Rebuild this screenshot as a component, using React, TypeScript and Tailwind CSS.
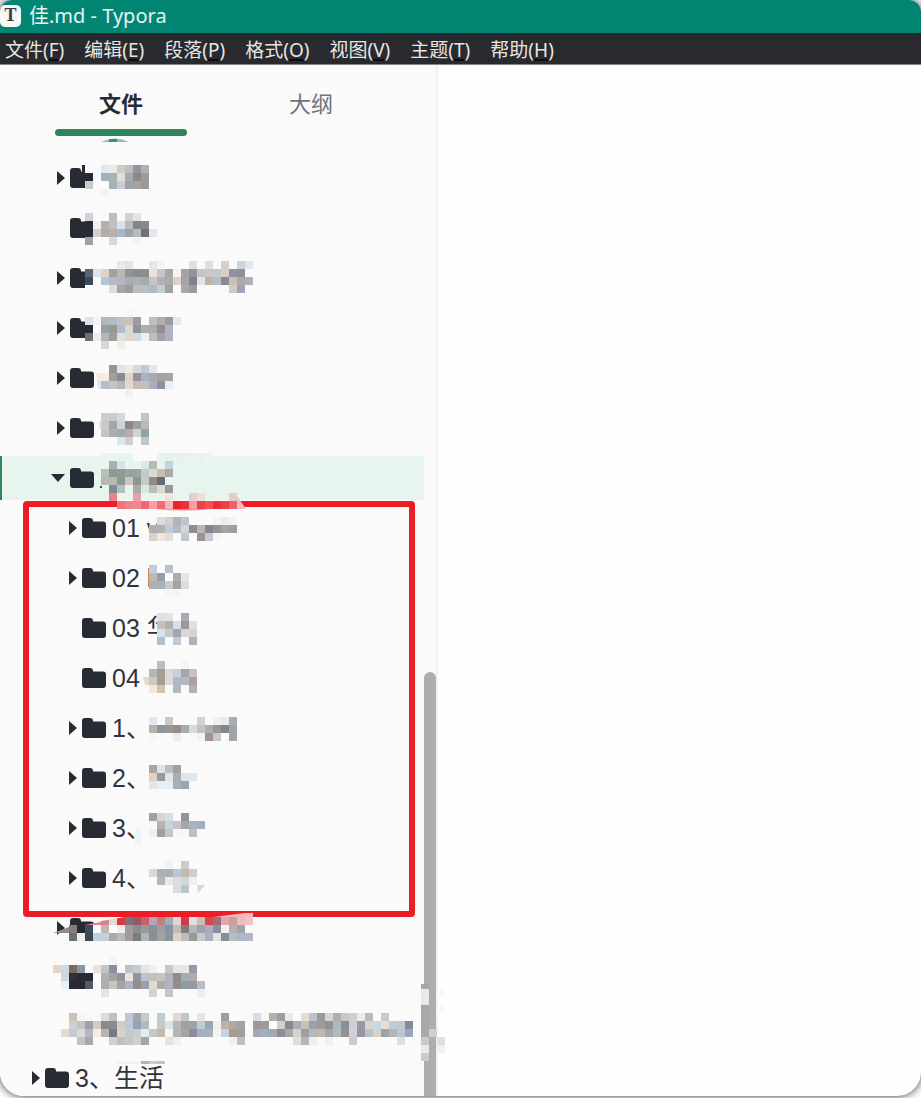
import type { ReactNode } from 'react';

const CELL = 8;
const PAPER = 'fafafa';

// One line per row of cells, colours in hex. '.' leaves a cell open, '-' paints it in the sidebar colour.
interface MosaicData {
    x: number;
    y: number;
    lines: string[];
}

type Arrow = 'closed' | 'open' | 'none';

interface TreeItem {
    id: number;
    arrow: Arrow;
    folder?: boolean;
    label?: string;
    selected?: boolean;
    mosaic?: MosaicData;
    extra?: ReactNode;
}

const menus = [
    { label: '文件', key: 'F' },
    { label: '编辑', key: 'E' },
    { label: '段落', key: 'P' },
    { label: '格式', key: 'O' },
    { label: '视图', key: 'V' },
    { label: '主题', key: 'T' },
    { label: '帮助', key: 'H' },
];

const topItems: TreeItem[] = [
    {
        id: 1,
        arrow: 'closed',
        mosaic: {
            x: 85,
            y: 1,
            lines: [
                '. . f7f7f7',
                '- - dfe9ed efe9e2 cfcbc9 bebec2 8f969e aeb0ba',
                '272b33 - 9fb2c3 a8b2ae deddd7 a9a9a9 8e8882 999a9d',
                'c9cacc - fdfdfd a7b1ad cacdd7 9da2ad a9a19d 9a9a9c',
                '. . f2f4f6',
            ],
        },
        extra: <path d="M82 9h3v8h-3z" fill="#272b33" />,
    },
    {
        id: 2,
        arrow: 'none',
        mosaic: {
            x: 85,
            y: 7,
            lines: [
                'd0d1d6 - . c5b9b3 . d3d0d0 dfe5e7',
                '272b33 f2efed b9afa8 bcc2c1 d8e3ec bdb9ba 858589 8a898c',
                '272b33 d5cfcd b0aeb0 b9afa7 a7b5c6 9ba4b1 b7babb 727177 e1e8ed',
                'a0a1a4 . . d2d9df . . f4f4f4',
            ],
        },
    },
    {
        id: 3,
        arrow: 'closed',
        mosaic: {
            x: 85,
            y: 5,
            lines: [
                '- . . . e9e9ea e2e5e8 . . e1e7ed f4f4f4 . . . dedfe1 . dedede . d7cfca . d0d3d8 e0e7ee',
                '596571 dbe4ee e0d2c5 a4a19b b5b7b8 919597 868e96 8c8f90 ede1d4 c4c6c6 a6a8a7 f6f3ef a3a2a7 95929f c5c5c7 c8cac9 c8caca d9cfc8 8f92a0 8d919d',
                '384b60 - b5c5d5 b6b8c6 b4b5c1 a6adb7 aeb1ab a8abac c0c6cc b8adb0 a9aca9 dfd2c5 a5a3a7 84818a e4e4e5 bdb5ac b2bec8 8f8992 c9bfb9 a9a9a8 b1b1b8',
                '- - . d9dee6 a3a5a6 9b9c9b b9bdc3 b4bfc6 b1b8c3 c0cfd4 a1a19e . a8a8b1 9b9aa1 . . . f7f8f8 d3cac3 9ba6b6',
            ],
        },
    },
    {
        id: 4,
        arrow: 'closed',
        mosaic: {
            x: 85,
            y: 3,
            lines: [
                '. . . . . f7f6f5',
                'dee0e6 f6f3f0 b4b7b7 b2bbc7 c3c1c2 cdc1b9 9d9ca6 . b8c1bd b6adaa 9b9ba2 e2ebf4',
                '. - 959fa7 979990 b4bccb d9d8d6 8e9498 abadae aaabad 8f8e95 aeb4c2',
                '6f7074 e6eff6 b4b6b4 a09c98 e0e0df dfd6d1 cfdce8 e8f0f4 bfbcbf a1a1ad adb2c1',
                '. . d6d8d6 . eeede9',
            ],
        },
    },
    {
        id: 5,
        arrow: 'closed',
        mosaic: {
            x: 101,
            y: 9,
            lines: [
                '. 939398 e1e2e1 ecebe9 d9d8d4 c2c9d6 dfe7ec',
                'f4ecdf a29f98 8b8a92 e1d3c5 96939d a9b2bf b2a8a9 a2a2a5 a3a7a7',
                'b9bec6 c4c5c7 b7b6b9 e5d8c8 c6beb6 c4c0bb a5b0be 93929c e5f0f6',
                '. . . f0f1f3',
            ],
        },
        extra: (
            <>
                <path d="M96 17h5v8h-4z" fill="#f2e8e8" />
                <path d="M97 25h4v8h-3z" fill="#dde8f2" />
            </>
        ),
    },
    {
        id: 6,
        arrow: 'closed',
        mosaic: {
            x: 101,
            y: 7,
            lines: [
                'cccdcc cacbca d3d9dd . . c4c5c7',
                'c7c9cb a4a4a9 cbd4de 8a888d 9aa3a0 b6b9bd',
                'c4c5c5 b2acb6 a2adab b9aba8 d4d2d0 93a3ac',
                '. . dfe6e9 d2cdd0 . c2c4c6',
            ],
        },
        extra: <path d="M99 15h2v8h-2z" fill="#dde8f2" />,
    },
    {
        id: 7,
        arrow: 'open',
        selected: true,
        mosaic: {
            x: 101,
            y: -3,
            lines: [
                'e8f4ee e8f4ee e8f4ee e8f4ee - - - e8f2ec e8f2ec e8f2ec e8f2ec ebf3ef e8f2ec edf4f0',
                '. a4b2b8 d8e4e4 . . dce8e2 b5bab5 . bdd4dc',
                'b8bfb6 8c9896 929a96 98a29e 9da3a2 c1cbc5 d9dbcd c8bcb0 a9aaa7',
                'b7b9b0 b8b9b0 8f9697 c9c8bb 8e9690 c1ccc8 918c80 65697a',
                '. 828a93 b4c0bb . a4adac dde5e0 b8beb5 d8dbd0 929b97',
                '. ee8288 . . f0a0a4 . . . f0e2dd . . e5d0cd e8e0da . . . e3cdca',
                '. . ec747a f08489 f0888c ed6b70 f3a0a4 f06a70 f5b5b8 ee2028 f03038 f4a0a4 ee4048 f05058 ee3038 ee4048 ef6068',
            ],
        },
        extra: (
            <>
                <path d="M237 40l9 13h-9z" fill="#f8bcc0" />
                <path d="M155 53h56q-24 3-56 0z" fill="#f29096" />
                <path d="M100 30h2v2h-2z" fill="#44505c" />
            </>
        ),
    },
];

const boxedItems: TreeItem[] = [
    {
        id: 8,
        arrow: 'closed',
        label: '01 v',
        mosaic: {
            x: 149,
            y: 11,
            lines: [
                '. dcdcdc d0d0d0 b3b3b9 bfc4ce . . . f5f5f5 efecec f3f3f3',
                'acaeba b5b0b0 bccbdf b4b9c2 cdd8dc 958b8a b9b6b6 858690 929499 ada1a2 9f9fa1',
                'ddd0c8 f0e6e1 e8dcd8 . c2c8d2 . 989494 c7cace f6f6f6',
            ],
        },
    },
    {
        id: 9,
        arrow: 'closed',
        label: '02 l',
        mosaic: {
            x: 149,
            y: 9,
            lines: [
                'c1cddc . b8c0cf',
                'c0b9b3 9a9ca6 fdfdfd b0acaa e6e6e6',
                'a8b0b8 a7b3b9 cccbcb a4a2a5 dcdcdc',
                '. . f7f7f7 f8f8f8',
            ],
        },
    },
    {
        id: 10,
        arrow: 'none',
        label: '03 华',
        mosaic: {
            x: 157,
            y: 7,
            lines: [
                'e0e2e1 dfe4e8 - a5abb2 -',
                'c4c0b8 b2b1ad d3e0ea 9e9898 dfe1e1',
                'd3e2ee c8c8c9 a2a6b1 d6d7d6 dcd1c8',
                'b2bece - c0cbd6 - b2b0b7',
            ],
        },
        extra: <path d="M165-16h16v7h-16z" fill="#f5f5f5" />,
    },
    {
        id: 11,
        arrow: 'none',
        label: '04',
        mosaic: {
            x: 149,
            y: 5,
            lines: [
                '. b6bfc1 . . f1f7f6',
                'b2b8b8 a89d93 dadada c9d0dd a5a5ad cdc0bc',
                'd0c6ba a89d93 dadada b1b7c4 b4b9c6 a4a3a5',
                'f4e7da d1c3b4 . b0b9be . b9aea9',
            ],
        },
        extra: <path d="M143 21h6v8h-4z" fill="#e7dace" />,
    },
    {
        id: 12,
        arrow: 'closed',
        label: '1、',
        mosaic: {
            x: 149,
            y: 11,
            lines: [
                'e4e7ef . c7c9cb . . . d8d2cf . f1f0f0 e9eced aaaeb2',
                'b9b0ac 8f939c 9c948e 958d8a a8adaf d6dadc c2c2bf a9adb5 9b9492 808691 a2a3a7',
                'f6f6f6 . . e9ecf1 . . f2f2f2 a3958d c8c7cb . 9fa6ad',
            ],
        },
    },
    {
        id: 13,
        arrow: 'closed',
        label: '2、',
        mosaic: {
            x: 149,
            y: 9,
            lines: [
                'a7a7a5 dfe2ea bbbec1 a0a09f',
                'e2d0c0 99999d e2e3e4 a5afba e5e3e4 dde8f0',
                'e4e5e6 e7eff5 e7eff5 a5afba 9da3ad f7f8f8',
                '. f7f8f8',
            ],
        },
    },
    {
        id: 14,
        arrow: 'closed',
        label: '3、',
        mosaic: {
            x: 149,
            y: 7,
            lines: [
                'a2a1a0 d6d4d5 d5dde5 . 949298',
                'f9f8f6 b6b1b0 c6d3d8 c6c3cb a1a8ab a6b3c1 a4afbe',
                'f3efec a09ea3 c7c6c7 f9f7f2 f8f7f3 c2c0bd',
            ],
        },
        extra: <path d="M135 23h6v16h-6z" fill="#eef3f6" />,
    },
    {
        id: 15,
        arrow: 'closed',
        label: '4、',
        mosaic: {
            x: 149,
            y: 5,
            lines: [
                '. . eff3f6 . cccccc',
                'dfd7d4 b0adb3 acafb8 b8c7db c5b8b1 cfcdce',
                '. b1b8c1 e9e9e9 dcdcdb d3d7d9 f4efeb',
                '. . . dcdcdc b8c6ce',
            ],
        },
        extra: <path d="M197 29h8l-7 8z" fill="#d3d7e1" />,
    },
];

const bottomItems: TreeItem[] = [
    {
        id: 16,
        arrow: 'closed',
        mosaic: {
            x: 69,
            y: 11,
            lines: [
                '. . . . d98288 dedcd8 e5343c 757482 935a66 c95f68 b1a6b8 c07e7e 9aaebb e4d5d5 d23a44 dfe0e4 c8bfb3 d9454f a46b72 e0a8ac c8a09c eebbbd f5c2c5',
                '8b7976 252a33 3c4c60 - c2b5b8 fdfdfd eeebe8 a29c98 8f8d8c 979a9a 868f9a 9b9da3 8892a0 c2bdb3 817d7a b3b6bd a0a0ae aaaeb9 8a8fa0 f0f1ec b3b1b7 a2a3a9 -',
                '6d6f75 ececed 42474f bfd0de c7d0d8 a8abae b6b9bd a29c98 7b7c7c b0b2b4 878f98 a0a39e 8b95a2 dcd2ca c0bcc0 969a98 c9c9c9 a7b1c1 e6e2dc 7f9298 b5bdc4 aab8cc b3b7c0',
            ],
        },
        extra: (
            <>
                <path d="M53 27l16-6v6z" fill="#8c8c98" />
                <path d="M85 19l16-3v3z" fill="#f08088" />
                <path d="M101 11h24l-24 4z" fill="#fafafa" />
                <path d="M213 11l32-4h8v4z" fill="#f7b8bb" />
            </>
        ),
    },
    {
        id: 17,
        arrow: 'none',
        folder: false,
        mosaic: {
            x: 53,
            y: 1,
            lines: [
                '. . . . . . . f6f5f2',
                'e3d5ce d2d9e4 7a6a63 8994a4 . e9e1db c3c3c8 8a909f . c0c1c4 c3ccd3 e4e5e1 ecf1f5 . c6c7c8 e6e6e6 e6e6e6 9a99a5',
                'fafaf3 cbd8e3 372d33 272b33 272b33 . acb2ae a1a5a2 8d949b ebe2dc 8d969c bdc2cd c9beb6 c4c5c5 b1b3bd 8b8c8e a9abb3 b1a7b0',
                '. e8f0f5 272b33 272b33 515966 . adb1ab c8c4bf a5a3a7 aab4c4 948d8b 9c9eaa dfdbcf adaea8 b1b3bd 958d8c 8e9aa7 99989f b6bccb',
                '. . . . . . e3e3ea . . . . . d3d3d3 . c5c6c9 . . . e8ecf3',
            ],
        },
    },
    {
        id: 18,
        arrow: 'none',
        folder: false,
        mosaic: {
            x: 61,
            y: 7,
            lines: [
                'fbfbf2 cfc1ba f3f4f6 f5f7f8 . dddcda c7bfbd . bdc7d6 a8a5aa c3cbce . bfccd4 . dfd8d6 c0c5ce . eae6e4 . . 989ca8 . . . d5dee5 f7f6f2 afb2b4 a69c96 e8ebee . e7ddd7 bcc3ce 999a9c d5d5d4 adafab c8c6c9 d2ceca edecea b7bcc1 . c8cace',
                'fbfbf2 ced0d2 c1c3c5 a19fa8 d6cbc0 8a8b89 848e94 d5cdc4 bdc9db 93a4b9 b4bab8 . c5c9ca dfe2e3 b8b5b6 9fa29d 9aa5b1 bccbd5 9ba6b5 f3f0ec bdb2aa b0a8a5 a3a3a6 . 9a9a9e 9a9e95 fdfdfb d4cfcd 858c8d adaeb1 c9c0ba 9aa0ad a09b99 939198 b0b7ba 8a8f97 cccfda 969aa5 d7d7d0 c9d8e8 e4ded4 bacddb c8c7cd 8289a0',
                'e6dbd1 c5cad4 dadad8 b3b8bf f2eeeb b9b5b2 77797e d5d3d0 c7c8ca cccdcf e1edf1 c3c8cf c6b9a8 f7f7f7 b5b5b8 a7a4a8 8d8c9a a4afc4 a8b0bd f5f4f0 c9d3e0 a99a8f a09f9f . a5a8b0 9fb0c2 a4a9b6 8b8f91 a6a8a5 d5d3cc 9c9f9f b1bbbc c2b6b0 a5a5ae b2b9bd 969093 d0d2d8 9a96a0 b8c3c9 d8d2c8 9ea1ae b3b6b2 b8c5d6 9da6b8',
                '. . c2c3c4 a5a7af . . d0cfcf c0c0c0 c4c6c6 d1d1d2 9faaa8 . . e2e2e2 ecf0f7 . . . . . . edf0f9 c0c0c4 . . . . . . dededa b7b7b1 efefea . f0f0f0 . . d0cbcb . . . . . dfdfe1',
            ],
        },
    },
];

const lastItem: TreeItem = {
    id: 19,
    arrow: 'closed',
    label: '3、生活',
    extra: (
        <>
            <path d="M117 5h24v3h-24z" fill="#f3f3f3" />
            <path d="M141 5h8v3h-8z" fill="#b4b4b4" />
            <path d="M149 5h8v3h-8z" fill="#cccccc" />
            <path d="M157 5h8v3h-8z" fill="#c3c3c6" />
        </>
    ),
};

const scrollMosaic: MosaicData = {
    x: 0,
    y: 5,
    lines: [
        'e9e9ea . f9f9f9',
        'e9e9ea . .',
        'a8a8a8 . f9f9f9',
        'a8a8a8 . .',
        'a8a8a8 . .',
        'a8a8a8 cfcfcf .',
        'cacaca . e0e0e0',
        'e9e9e9 . f0f0f0',
        'cbcbcb',
    ],
};

function Cells({ x, y, lines }: MosaicData) {
    return (
        <>
            {lines.map((line, row) =>
                line.split(' ').map((color, col) =>
                    color === '.' ? null : (
                        <rect
                            key={`${row}-${col}`}
                            x={x + col * CELL}
                            y={y + row * CELL}
                            width={CELL}
                            height={CELL}
                            fill={`#${color === '-' ? PAPER : color}`}
                        />
                    )
                )
            )}
        </>
    );
}

function ArrowIcon({ arrow }: { arrow: Arrow }) {
    return (
        <span className="flex w-2 shrink-0 justify-end">
            {arrow === 'closed' && (
                <svg className="h-4 w-2 shrink-0" viewBox="0 0 8 16" fill="#272b33">
                    <path d="M0 1v14l8-7z" />
                </svg>
            )}
            {arrow === 'open' && (
                <svg className="h-2 w-4 shrink-0" viewBox="0 0 16 8" fill="#272b33">
                    <path d="M2 0h14L9 8z" />
                </svg>
            )}
        </span>
    );
}

function FolderIcon() {
    return (
        <svg className="h-5 w-6 shrink-0" viewBox="0 0 24 20" fill="#272b33">
            <path d="M3 0h5a3 3 0 0 1 3 3v.5h10a3 3 0 0 1 3 3V17a3 3 0 0 1-3 3H3a3 3 0 0 1-3-3V3a3 3 0 0 1 3-3z" />
        </svg>
    );
}

function TreeRow({ item, indent }: { item: TreeItem; indent: string }) {
    return (
        <li className={`relative h-11 ${item.selected ? 'border-l-2 border-[#2f855a] bg-[#e8f4ee]' : 'border-l-2 border-transparent'}`}>
            <button type="button" className={`flex h-full w-full items-center text-left ${indent}`}>
                <ArrowIcon arrow={item.arrow} />
                <span className="flex items-center gap-1.5 pl-[5px]">
                    {item.folder !== false && <FolderIcon />}
                    {item.label && <span className="whitespace-pre pt-0.5">{item.label}</span>}
                </span>
            </button>
            <svg className="pointer-events-none absolute top-0 -left-0.5 z-10 h-11 w-full overflow-visible">
                {item.mosaic && <Cells {...item.mosaic} />}
                {item.extra}
            </svg>
        </li>
    );
}

function TitleBar() {
    return (
        <header className="flex h-[33px] shrink-0 items-center gap-2 bg-[#028673] pb-0.5 text-[20px] text-[#e4f3f0]">
            <span className="flex h-[22px] w-[21px] items-center justify-center rounded-[5px] bg-[#f7f7f7] font-['Liberation_Serif',serif] text-[18px] font-bold text-[#3c3c3c]">
                T
            </span>
            <h1>佳.md - Typora</h1>
        </header>
    );
}

function MenuBar() {
    return (
        <nav className="flex h-8 shrink-0 items-center gap-5 border-b border-[#85868a] bg-[#292a2d] px-[5px] pt-[3px] text-[19px] text-[#e6e6e6]">
            {menus.map(menu => (
                <button key={menu.key} type="button" className="whitespace-nowrap">
                    {menu.label}(
                    <span className="underline decoration-[#0c0c0d] decoration-2 underline-offset-2">{menu.key}</span>)
                </button>
            ))}
        </nav>
    );
}

export default function App() {
    return (
        <div className="h-screen overflow-hidden bg-white pb-0.5 font-['Noto_Sans','Noto_Sans_CJK_SC',sans-serif]">
            <div className="flex h-full flex-col overflow-hidden rounded-t-[12px] rounded-b-[24px] bg-[#fefefe] shadow-[0_0_10px_rgba(0,0,0,0.8)]">
                <TitleBar />
                <MenuBar />
                <div className="flex min-h-0 flex-1">
                    <aside className="flex w-[438px] shrink-0 flex-col border-r-2 border-[#f1f1f1] bg-[#fafafa]">
                        <div className="grid h-[71px] shrink-0 grid-cols-2 pr-[30px] pl-[26px] text-[22px] text-[#70747a]">
                            <button type="button" className="flex flex-col items-center justify-end font-bold text-[#272b33]">
                                <span className="pb-[9px]">文件</span>
                                <span className="h-[7px] w-[132px] rounded-full bg-[#2f855a]" />
                            </button>
                            <button type="button" className="flex items-end justify-center pb-4">
                                大纲
                            </button>
                        </div>
                        <div className="flex min-h-0 flex-1">
                            <div className="relative flex flex-1 flex-col gap-1.5 pt-5 font-['Liberation_Sans','Noto_Sans_CJK_SC',sans-serif] text-[25px] text-[#30353d]">
                                <svg className="absolute top-0.5 left-[101px] h-1 w-7" viewBox="0 0 28 4">
                                    <path d="M0 4Q14-3 28 4z" fill="#8fbda5" />
                                    <path d="M8 1h8v3H8z" fill="#3f8f67" />
                                </svg>
                                <ul className="flex flex-col gap-1.5">
                                    {topItems.map(item => (
                                        <TreeRow key={item.id} item={item} indent="pl-[55px]" />
                                    ))}
                                </ul>
                                <div className="relative">
                                    <div className="pointer-events-none absolute -top-[5px] right-[9px] -bottom-[17px] left-[23px] rounded-[4px] border-[6px] border-[#ee1c24]" />
                                    <ul className="flex flex-col gap-1.5">
                                        {boxedItems.map(item => (
                                            <TreeRow key={item.id} item={item} indent="pl-[67px]" />
                                        ))}
                                    </ul>
                                </div>
                                <ul className="flex flex-col gap-1.5">
                                    {bottomItems.map(item => (
                                        <TreeRow key={item.id} item={item} indent="pl-[55px]" />
                                    ))}
                                    <TreeRow item={lastItem} indent="pl-[30px]" />
                                </ul>
                            </div>
                            <div className="relative flex w-3 shrink-0 flex-col pt-[536px]">
                                <div className="flex-1 rounded-t-full bg-[#adadad]" />
                                <svg className="absolute top-[848px] -left-[3px] z-10 h-20 w-6">
                                    <path d="M0 0h8v5H0z" fill="#a8a8a8" />
                                    <Cells {...scrollMosaic} />
                                </svg>
                            </div>
                        </div>
                    </aside>
                    <main className="flex-1" />
                </div>
            </div>
        </div>
    );
}
